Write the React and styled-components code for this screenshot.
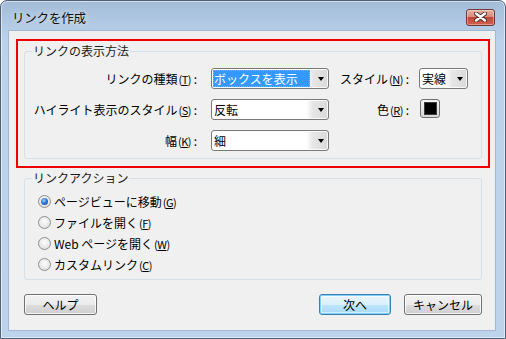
import React, { useState } from "react";
import styled, { createGlobalStyle, css } from "styled-components";

const GlobalStyle = createGlobalStyle`
  html, body {
    margin: 0;
    padding: 0;
    background: #ffffff;
  }
  * {
    box-sizing: border-box;
  }
  body {
    font-family: "Noto Sans CJK JP", "Noto Sans", sans-serif;
    font-size: 12px;
    color: #000;
  }
`;

function CloseIcon() {
  return (
    <svg width="13" height="10" viewBox="0 0 13 10">
      <path d="M2 1.5 L11 8.5 M11 1.5 L2 8.5" stroke="#4b2c28" strokeWidth="4.2" strokeLinecap="round" />
      <path d="M2 1.5 L11 8.5 M11 1.5 L2 8.5" stroke="#ffffff" strokeWidth="2.4" strokeLinecap="round" />
    </svg>
  );
}

// a mnemonic letter, like (T)
function Mn({ k }) {
  return (
    <Key>
      (<u>{k}</u>)
    </Key>
  );
}

function Combo({ width, value, selected }) {
  return (
    <ComboBox $width={width}>
      <ComboText $selected={selected}>{value}</ComboText>
      <Arrow />
    </ComboBox>
  );
}

export default function App() {
  const [action, setAction] = useState("page");

  const actions = [
    { id: "page", label: "ページビューに移動", k: "G" },
    { id: "file", label: "ファイルを開く", k: "F" },
    { id: "web", label: "Web ページを開く", k: "W" },
    { id: "custom", label: "カスタムリンク", k: "C" },
  ];

  return (
    <>
      <GlobalStyle />
      <Window>
        <TitleBar>
          <Title>リンクを作成</Title>
          <CloseButton>
            <CloseIcon />
          </CloseButton>
        </TitleBar>
        <Client>
          <Highlight>
            <Group $width={458}>
              <Legend>リンクの表示方法</Legend>
              <AppearanceGrid>
                <Label $pad={4}>
                  リンクの種類<Mn k="T" /> :
                </Label>
                <Combo width={118} value="ボックスを表示" selected />
                <Label>
                  スタイル<Mn k="N" /> :
                </Label>
                <Combo width={49} value="実線" />

                <Label $pad={4}>
                  ハイライト表示のスタイル<Mn k="S" /> :
                </Label>
                <Combo width={118} value="反転" />
                <Label>
                  色<Mn k="R" /> :
                </Label>
                <Swatch>
                  <SwatchColor $color="#000000" />
                </Swatch>

                <Label $pad={4}>
                  幅<Mn k="K" /> :
                </Label>
                <Combo width={118} value="細" />
              </AppearanceGrid>
            </Group>
          </Highlight>

          <ActionGroup $width={458}>
            <Legend>リンクアクション</Legend>
            <RadioList>
              {actions.map((a) => (
                <RadioRow key={a.id} onClick={() => setAction(a.id)}>
                  <Radio $checked={action === a.id} />
                  <span>
                    {a.label}
                    <Mn k={a.k} />
                  </span>
                </RadioRow>
              ))}
            </RadioList>
          </ActionGroup>

          <ButtonRow>
            <Button $width={73}>ヘルプ</Button>
            <ButtonGroup>
              <Button $width={72} $default>
                次へ
              </Button>
              <Button $width={78}>キャンセル</Button>
            </ButtonGroup>
          </ButtonRow>
        </Client>
      </Window>
    </>
  );
}

// STYLED COMPONENTS

const Window = styled.div`
  width: 506px;
  height: 339px;
  border: 1px solid #50627a;
  border-radius: 7px 7px 0 0;
  background: linear-gradient(#a2bbd7 0px, #b3cbe5 26px, #bad2eb 40px, #bcd3eb 100%);
  box-shadow: inset 0 0 0 1px rgba(255, 255, 255, 0.55);
  display: flex;
  flex-direction: column;
`;

const TitleBar = styled.div`
  height: 29px;
  display: flex;
  align-items: center;
  justify-content: space-between;
  padding: 3px 10px 0 11px;
`;

const Title = styled.div`
  font-size: 12.5px;
  color: #111;
  text-shadow: 0 0 6px rgba(255, 255, 255, 0.9);
  letter-spacing: -0.2px;
`;

const CloseButton = styled.div`
  width: 29px;
  height: 17px;
  border: 1px solid #6e3a33;
  border-radius: 3px;
  background: linear-gradient(#e8b3a8 0%, #d98a7b 45%, #c3463a 50%, #d2614f 100%);
  box-shadow: inset 0 0 0 1px rgba(255, 255, 255, 0.35);
  display: flex;
  align-items: center;
  justify-content: center;
`;

const Client = styled.div`
  margin: 0 9px 0 7px;
  height: 301px;
  border: 1px solid #a3b8d0;
  background: #f0f0f0;
  padding: 8px 0 0 7px;
`;

const Highlight = styled.div`
  width: 474px;
  height: 129px;
  border: 2px solid #f00000;
  padding: 3px 0 0 6px;
`;

const Group = styled.fieldset`
  width: ${(p) => p.$width}px;
  margin: 0;
  padding: 0;
  border: 1px solid #d5dfe5;
  border-radius: 3px;
  min-inline-size: 0;
`;

const ActionGroup = styled(Group)`
  margin: 3px 0 0 8px;
`;

const Legend = styled.legend`
  margin-left: 7px;
  padding: 0 1px;
  font-size: 12px;
  line-height: 14px;
  color: #1a1a1a;
`;

const AppearanceGrid = styled.div`
  display: grid;
  grid-template-columns: 176px 118px 70px 49px;
  grid-auto-rows: 21px;
  column-gap: 10px;
  row-gap: 10px;
  padding: 10px 0 7px 0;
  align-items: center;
`;

const Label = styled.div`
  text-align: right;
  white-space: nowrap;
  line-height: 21px;
  padding-right: ${(p) => p.$pad || 0}px;
`;

const Key = styled.span`
  font-size: 11px;
  letter-spacing: -0.5px;
  margin-left: 1px;
`;

const ComboBox = styled.div`
  width: ${(p) => p.$width}px;
  height: 21px;
  border: 1px solid #7a7a7a;
  border-radius: 3px;
  background: linear-gradient(
    to right,
    #ffffff 0,
    #ffffff calc(100% - 22px),
    #e6e6e6 calc(100% - 15px),
    #dadada 100%
  );
  box-shadow: inset 0 0 0 1px rgba(255, 255, 255, 0.8);
  display: flex;
  align-items: center;
  padding: 1px 4px 1px 1px;
`;

const ComboText = styled.div`
  flex: 1;
  min-width: 0;
  height: 17px;
  line-height: 17px;
  padding-left: 1px;
  margin-right: 8px;
  font-size: 12px;
  white-space: nowrap;
  overflow: hidden;
  ${(p) =>
    p.$selected &&
    css`
      background: #3399ff;
      color: #ffffff;
      outline: 1px dotted #f0a030;
      outline-offset: -1px;
    `}
`;

const Arrow = styled.div`
  flex: none;
  width: 0;
  height: 0;
  border-left: 3.5px solid transparent;
  border-right: 3.5px solid transparent;
  border-top: 4px solid #000;
`;

const Swatch = styled.div`
  width: 20px;
  height: 19px;
  margin-left: 1px;
  border: 1px solid #707070;
  border-radius: 3px;
  background: linear-gradient(#f6f6f6 0%, #e6e6e6 50%, #d8d8d8 100%);
  display: flex;
  align-items: center;
  justify-content: center;
  margin-top: -2px;
`;

const SwatchColor = styled.div`
  width: 13px;
  height: 13px;
  background: ${(p) => p.$color};
  border: 1px solid #3c3c3c;
`;

const RadioList = styled.div`
  display: flex;
  flex-direction: column;
  padding: 6px 0 4px 13px;
`;

const RadioRow = styled.label`
  height: 21px;
  display: flex;
  align-items: center;
  gap: 3px;
  white-space: nowrap;
`;

const Radio = styled.span`
  width: 13px;
  height: 13px;
  border-radius: 50%;
  border: 1px solid #8f8f8f;
  background: radial-gradient(circle at 50% 40%, #fdfdfd 0%, #e9e9e9 55%, #d2d2d2 100%);
  display: flex;
  align-items: center;
  justify-content: center;
  &::after {
    content: "";
    width: 7px;
    height: 7px;
    border-radius: 50%;
    display: ${(p) => (p.$checked ? "block" : "none")};
    background: radial-gradient(circle at 40% 35%, #9fd0ff 0%, #2d7ad8 45%, #0d3d8c 100%);
  }
`;

const ButtonRow = styled.div`
  width: 458px;
  margin: 14px 0 0 8px;
  display: flex;
  justify-content: space-between;
`;

const ButtonGroup = styled.div`
  display: flex;
  gap: 13px;
`;

const Button = styled.button`
  width: ${(p) => p.$width}px;
  height: 21px;
  padding: 0;
  font-family: inherit;
  font-size: 12px;
  color: #000;
  border: 1px solid #707070;
  border-radius: 3px;
  background: linear-gradient(#f2f2f2 0%, #ebebeb 50%, #dddddd 51%, #cfcfcf 100%);
  box-shadow: inset 0 0 0 1px rgba(255, 255, 255, 0.8);
  ${(p) =>
    p.$default &&
    css`
      border-color: #3c7fb1;
      background: linear-gradient(#eaf6fd 0%, #d9f0fc 50%, #bee6fd 51%, #a7d9f5 100%);
      box-shadow: inset 0 0 0 1px #7fd0fa, inset 0 0 0 2px rgba(255, 255, 255, 0.5);
    `}
`;
